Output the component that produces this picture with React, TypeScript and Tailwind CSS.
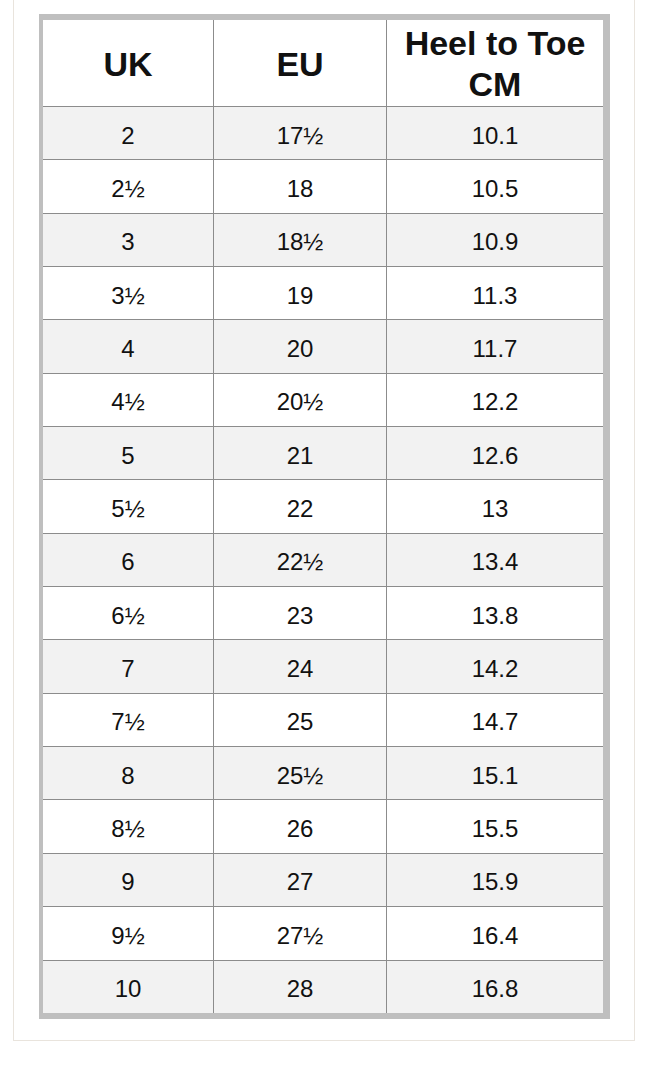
import React from "react";

const rows: [string, string, string][] = [
  ["2", "17½", "10.1"],
  ["2½", "18", "10.5"],
  ["3", "18½", "10.9"],
  ["3½", "19", "11.3"],
  ["4", "20", "11.7"],
  ["4½", "20½", "12.2"],
  ["5", "21", "12.6"],
  ["5½", "22", "13"],
  ["6", "22½", "13.4"],
  ["6½", "23", "13.8"],
  ["7", "24", "14.2"],
  ["7½", "25", "14.7"],
  ["8", "25½", "15.1"],
  ["8½", "26", "15.5"],
  ["9", "27", "15.9"],
  ["9½", "27½", "16.4"],
  ["10", "28", "16.8"],
];

export default function App() {
  return (
    <div
      className="w-[648px] h-[1080px] bg-white text-[#111]"
      style={{ fontFamily: '"Liberation Sans", Arial, Helvetica, sans-serif' }}
    >
      <div className="ml-[13px] w-[622px] border-x border-b border-[#e9e4dd] bg-white pl-[25px] pt-[14px] pb-[21px]">
        <div className="w-[571px] border-l-[4px] border-r-[7px] border-t-[6px] border-b-[6px] border-[#bfbfbf]">
          <div className="flex h-[86px] bg-white">
            <div className="w-[170px] flex items-center justify-center font-bold text-[34px] leading-[41px] pt-[2px]">
              UK
            </div>
            <div className="w-[173px] border-l border-[#8c8c8c] flex items-center justify-center font-bold text-[34px] leading-[41px] pt-[2px]">
              EU
            </div>
            <div className="flex-1 border-l border-[#8c8c8c] flex items-center justify-center text-center font-bold text-[34px] leading-[41px] pt-[2px]">
              Heel to Toe
              <br />
              CM
            </div>
          </div>
          {rows.map((r, i) => (
            <div
              key={i}
              className={
                "flex h-[53.35px] border-t border-[#8c8c8c] text-[24px] " +
                (i % 2 === 0 ? "bg-[#f2f2f2]" : "bg-white")
              }
            >
              <div className="w-[170px] flex items-center justify-center pt-[5px]">
                {r[0]}
              </div>
              <div className="w-[173px] border-l border-[#8c8c8c] flex items-center justify-center pt-[5px]">
                {r[1]}
              </div>
              <div className="flex-1 border-l border-[#8c8c8c] flex items-center justify-center pt-[5px]">
                {r[2]}
              </div>
            </div>
          ))}
        </div>
      </div>
    </div>
  );
}
